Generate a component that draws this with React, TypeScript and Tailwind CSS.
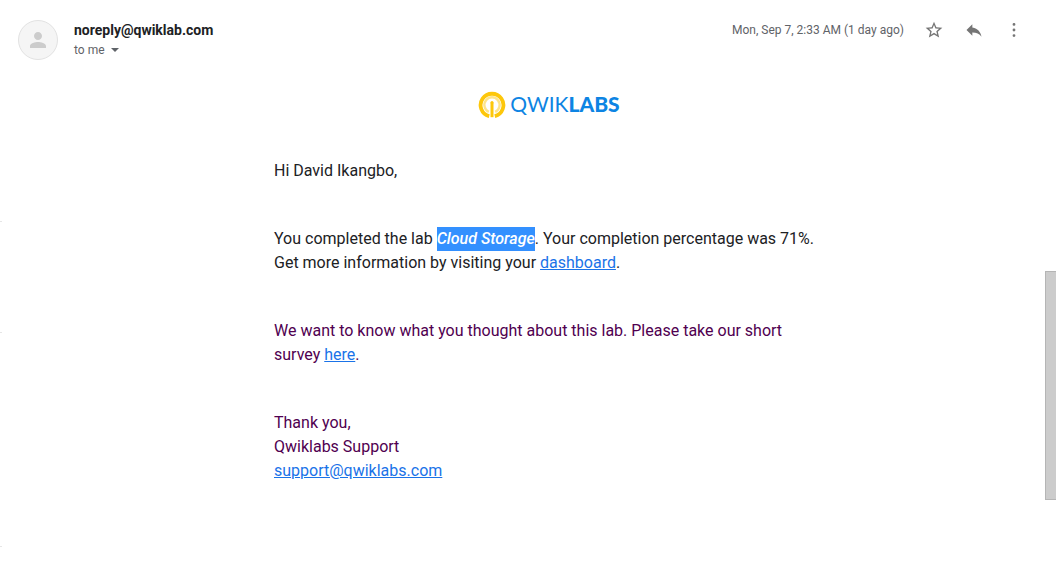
import React from "react";

function Avatar() {
  return (
    <div className="flex size-10 shrink-0 items-center justify-center rounded-full border border-[#e2e2e2] bg-[#f5f5f5]">
      <svg viewBox="0 0 24 24" className="size-6 fill-[#cccccc]" aria-hidden="true">
        <path d="M12 12c2.21 0 4-1.79 4-4s-1.79-4-4-4-4 1.79-4 4 1.79 4 4 4zm0 2c-2.67 0-8 1.34-8 4v2h16v-2c0-2.66-5.33-4-8-4z" />
      </svg>
    </div>
  );
}

function IconButton({ label, path }: { label: string; path: string }) {
  return (
    <button type="button" aria-label={label} className="flex size-5 items-center justify-center">
      <svg viewBox="0 0 24 24" className="size-5 fill-[#757575]" aria-hidden="true">
        <path d={path} />
      </svg>
    </button>
  );
}

function MessageHeader() {
  return (
    <header className="flex items-start gap-4 pt-5 pr-[21px] pl-4">
      <Avatar />
      <div className="flex-1">
        <h1 className="text-sm leading-5 font-bold text-[#202124]">noreply@qwiklab.com</h1>
        <button type="button" className="flex items-center gap-1 text-xs leading-5 text-[#5f6368]">
          to me
          <svg viewBox="0 0 12 12" className="size-3 fill-[#5f6368]" aria-hidden="true">
            <path d="M2 4h8L6 8z" />
          </svg>
        </button>
      </div>
      <div className="flex items-center gap-5">
        <time className="text-xs leading-5 text-[#5f6368]">Mon, Sep 7, 2:33 AM (1 day ago)</time>
        <IconButton
          label="Star"
          path="M22 9.24l-7.19-.62L12 2 9.19 8.63 2 9.24l5.46 4.73L5.82 21 12 17.27 18.18 21l-1.63-7.03L22 9.24zM12 15.4l-3.76 2.27 1-4.28-3.32-2.88 4.38-.38L12 6.1l1.71 4.04 4.38.38-3.32 2.88 1 4.28L12 15.4z"
        />
        <IconButton label="Reply" path="M10 9V5l-7 7 7 7v-4.1c5 0 8.5 1.6 11 5.1-1-5-4-10-11-11z" />
        <IconButton
          label="More"
          path="M12 3.6a1.7 1.7 0 1 0 0 3.4 1.7 1.7 0 0 0 0-3.4zm0 6.7a1.7 1.7 0 1 0 0 3.4 1.7 1.7 0 0 0 0-3.4zm0 6.7a1.7 1.7 0 1 0 0 3.4 1.7 1.7 0 0 0 0-3.4z"
        />
      </div>
    </header>
  );
}

function Logo() {
  return (
    <div className="flex items-center justify-center gap-1 text-[#0d84e3]">
      <svg viewBox="0 0 28 28" className="size-7" fill="none" aria-hidden="true">
        <path d="M11.2 26.2A11.4 11.4 0 1 1 16.8 26.2" stroke="#fdc70b" strokeWidth="3.8" />
        <path d="M10.8 21.8A7.6 7.6 0 1 1 17.2 21.8" stroke="#fde48a" strokeWidth="2.4" />
        <path d="M14 12.5V27.2" stroke="#fdc70b" strokeWidth="3" />
        <circle cx="14" cy="12.5" r="1.5" fill="#fdc70b" />
      </svg>
      <span className="font-[Lato,sans-serif] text-[21px] leading-7">
        QWIK<span className="font-black">LABS</span>
      </span>
    </div>
  );
}

function TextLink({ href, children }: { href: string; children: React.ReactNode }) {
  return (
    <a href={href} className="text-[#1a73e8] underline">
      {children}
    </a>
  );
}

function MessageBody() {
  return (
    <article className="mx-auto mt-[30px] max-w-[550px] text-base leading-6 text-[#202124]">
      <Logo />
      <p className="mt-[41px]">Hi David Ikangbo,</p>
      <p className="mt-11">
        You completed the lab{" "}
        <mark className="inline-block bg-[#3390ff] font-medium text-white italic">Cloud Storage</mark>. Your completion
        percentage was 71%. Get more information by visiting your <TextLink href="#dashboard">dashboard</TextLink>.
      </p>
      <div className="text-[#500050]">
        <p className="mt-11">
          We want to know what you thought about this lab. Please take our short survey{" "}
          <TextLink href="#survey">here</TextLink>.
        </p>
        <p className="mt-11">
          Thank you,
          <br />
          Qwiklabs Support
          <br />
          <TextLink href="mailto:support@qwiklabs.com">support@qwiklabs.com</TextLink>
        </p>
      </div>
    </article>
  );
}

export default function App() {
  return (
    <div className="flex min-h-screen bg-white font-[Roboto,sans-serif]">
      <div className="w-0.5 shrink-0 pt-[221px]" aria-hidden="true">
        <div className="h-px bg-[#e6e6e6]" />
        <div className="mt-[110px] h-px bg-[#e6e6e6]" />
        <div className="mt-[213px] h-px bg-[#e6e6e6]" />
      </div>
      <main className="min-w-0 flex-1">
        <MessageHeader />
        <div className="pr-[21px] pl-[72px]">
          <MessageBody />
        </div>
      </main>
      <div className="w-[11px] shrink-0 pt-[271px]" aria-hidden="true">
        <div className="h-[229px] border border-r-0 border-[#b5b5b5] bg-[#cccccc]" />
      </div>
    </div>
  );
}
